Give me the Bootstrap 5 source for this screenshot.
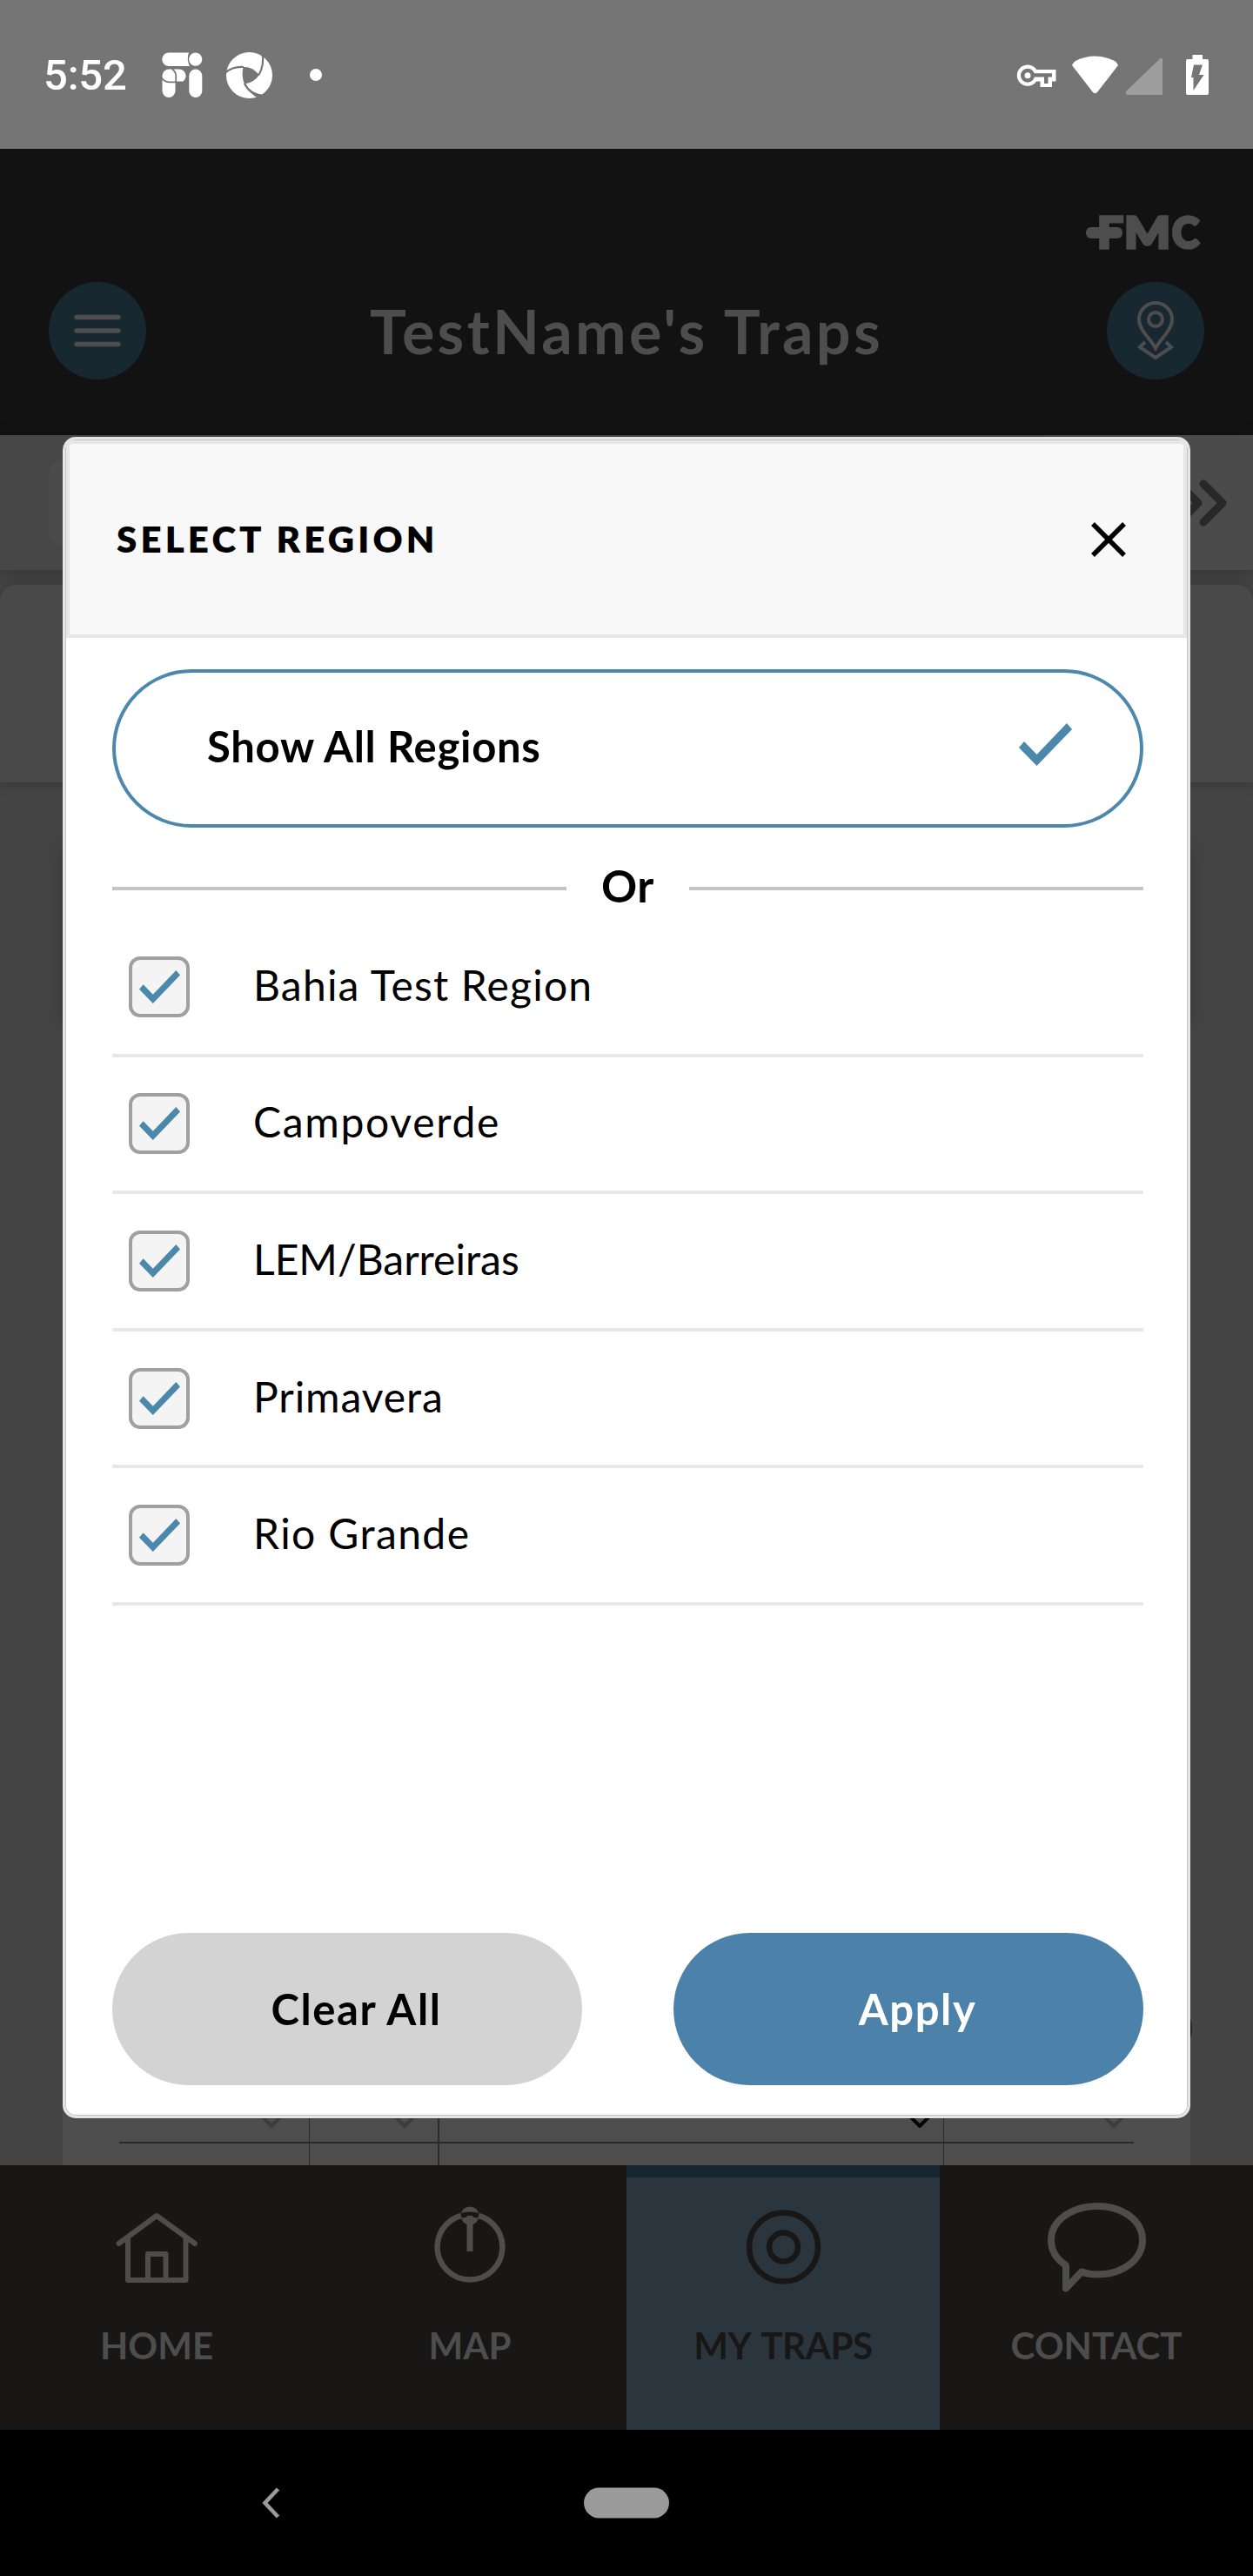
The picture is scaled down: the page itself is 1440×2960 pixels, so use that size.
<!DOCTYPE html>
<html lang="en">
<head>
<meta charset="utf-8">
<title>TestName's Traps</title>
<link href="https://cdn.jsdelivr.net/npm/bootstrap@5.3.0/dist/css/bootstrap.min.css" rel="stylesheet">
<style>
body{margin:0;background:#000;font-family:Lato,"Open Sans",sans-serif;color:#000}
.screen{width:1440px;height:2960px;overflow:hidden;line-height:1}
.screen svg{display:block;flex:none;overflow:visible}
.status-bar{height:171px;background:#757575;padding:0 51px 0 50px;color:#fff}
.clock{font:500 49px/60px Roboto,sans-serif;letter-spacing:-.2px;width:136px;padding-top:2px}
.app-head{height:329px;background:#121212;color:#4d4d4d;padding:76px 56px 64px}
.brand-row{height:39px;padding-right:6px}
.bar-row{height:112px;margin-top:38px}
.round-btn{width:112px;height:112px;background:#172831;border-radius:50%}
.page-title{font-size:70px;font-weight:700;letter-spacing:3.3px;margin:0}
.content{height:1988px;background:#444}
.filter-strip{height:155px;background:#4b4b4b;box-shadow:0 4px 18px rgba(0,0,0,.22);padding:29px 30px 28px 0}
.filter-left{width:1200px;height:155px;margin-top:-29px;margin-bottom:-28px;background:#474747;padding:29px 0 28px 56px}
.filter-box{height:98px;background:#4b4b4b;border-radius:16px}
.summary{height:227px;margin-top:17px;background:#484848;border-radius:18px 18px 0 0;box-shadow:0 2px 14px rgba(0,0,0,.22)}
.shade-card{height:200px;margin:75px 76px 0;background:#444;box-shadow:0 0 18px 2px rgba(0,0,0,.24)}
.trap-card{height:810px;margin:504px 72px 0;background:#4d4d4d}
.trap-grid{padding:0 65px;margin-top:748px;height:62px}
.trap-grid .grid-row{height:37px;border-bottom:2px solid #2a2a2a}
.trap-grid .grid-row + .grid-row{height:25px;border-bottom:0}
.gcell{border-right:1px solid #2a2a2a;padding-bottom:16px}
.gcell:nth-child(2){border-right-width:2px}
.gcell:last-child{border-right:0}
.w-a{width:219px;padding-right:31px}.w-b{width:149px;padding-right:26px}.w-c{width:580px;padding-right:15px}.w-d{padding-right:11px}
.fab{right:70px;top:1793px;width:76px;height:76px;border-radius:50%;background:#13202a}
.sheet{left:72px;top:2px;width:1296px;height:1932px;background:#fff;border:3px solid #e5e5e5;border-radius:15px;box-shadow:inset 0 0 0 1px #c4c4c4;padding:1px}
.sheet-head{height:227px;background:#f8f8f8;border:4px solid #e6e6e6;border-radius:6px 6px 0 0;padding:0 66px 0 54px}
.sheet-title{font-size:42px;font-weight:800;letter-spacing:4.15px;margin:0}
.sheet-body{padding:36px 50px 0 53px}
.all-pill{height:182px;border:4px solid #4b88ab;border-radius:91px;padding:0 78px 5px 105px;font-size:49px;font-weight:700;letter-spacing:.7px}
.all-pill svg{margin-top:-4px}
.or-row{height:106px;padding-top:34px;font-size:51px;font-weight:700;letter-spacing:.5px}
.or-row span{padding-bottom:7px}
.or-row .or-line{height:4px;width:522px;background:#c4c4c4;padding:0}
.region-row{height:157.6px;border-bottom:4px solid #e8e8e8;padding-left:19px;font-size:48px;gap:73px}
.region-name{padding-bottom:4px}
.ls-1{letter-spacing:1.2px}.ls-2{letter-spacing:1.7px}.ls-3{letter-spacing:.9px}.ls-4{letter-spacing:1.4px}
.tick-box{width:70px;height:70px;border:4px solid #a0a0a0;border-radius:13px;background:#f4f4f4}
.sheet-foot{margin-top:376px;padding:0 50px 0 53px}
.pill-btn{width:540px;height:175px;border:0;border-radius:88px;font-size:49px;font-weight:700;padding:0 0 0 21px;line-height:1;letter-spacing:1.6px}
.btn-clear{background:#d3d3d3;color:#000}
.btn-apply{background:#4c82a9;color:#fff}
.tabs{height:304px;background:#181715}
.tab{width:360px;color:#4d4d4d;font-size:42px;font-weight:700;border-top:14px solid transparent}
.tab.on{background:#2b353e;border-top-color:#172732;color:#181715;word-spacing:4px;letter-spacing:-.4px}
.tab svg{margin-top:20px}
.tab span{margin-top:42px}
.sys-nav{height:168px;background:#000}
</style>
<script src="https://cdn.jsdelivr.net/npm/bootstrap@5.3.0/dist/js/bootstrap.bundle.min.js"></script>
</head>
<body>
<svg width="0" height="0" class="position-absolute"><defs>
<symbol id="tick" viewBox="0 0 61 49"><path fill="#4b88ab" d="M6 21 20.500 36 55 0 61 7 20.500 49 0 28z"/></symbol>
<symbol id="down" viewBox="0 0 24 14"><path d="M1 1l11 11L23 1" fill="none" stroke="currentColor" stroke-width="4"/></symbol>
</defs></svg>
<div class="screen d-flex flex-column">
  <div class="status-bar d-flex align-items-center justify-content-between">
    <div class="d-flex align-items-center">
      <div class="clock">5:52</div>
      <svg width="186" height="54" viewBox="186 58 186 54" fill="#fff">
        <path d="M194 59.500h23q-3 7.500 1 15.500h-24a7.700 7.700 0 0 1 0-15.500z"/><circle cx="224.700" cy="67.200" r="7.600"/>
        <rect x="186.500" y="78.500" width="15" height="32.500" rx="7.500"/><path d="M195 78.500h11a7.600 7.600 0 0 1 0 15.300h-11z"/>
        <path d="M197.500 78q5 3.500 4.700 9v6.300h7M202.200 93.300h-8q-5.500 0-8.500-5" fill="none" stroke="#757575" stroke-width="1.700"/>
        <rect x="217.300" y="78.500" width="15" height="32.500" rx="7.500"/>
        <circle cx="286.500" cy="85.500" r="26.500"/>
        <path d="M279.500 76q10-1 18.500 9-6 9-17 10.500-4-9-1.500-19.500z" fill="#757575"/>
        <path d="M259 82.500q9-7.500 21-6.500M301.500 59.500q2.500 14-4 25.500M280.800 94.500q6 13 20.500 14.500" fill="none" stroke="#757575" stroke-width="2.200"/>
        <path d="M281 95q5 10 14 16l8-3q-14-1-22-13z" fill="#757575"/>
        <circle cx="363" cy="85" r="7"/>
      </svg>
    </div>
    <svg width="221" height="48" viewBox="1168 61 221 48" fill="#fff">
      <circle cx="1181" cy="85.700" r="12.200"/><path d="M1188 79h25.500v13.500h-4.500v6.500h-13.500v-6.500h-8z"/>
      <g fill="#757575"><circle cx="1181" cy="85.700" r="8"/><path d="M1186 83.300h23v4.200h-4.500v7.500h-4.500v-7.500h-14z"/></g><circle cx="1181" cy="85.700" r="3.500"/>
      <path d="M1232 74q1-3 4-5 22-11 45 0 3 2 4 5l-24 31q-2.500 2.500-5 0z"/>
      <path d="M1333 66.500q3-2 3 1v40.500h-40q-4-1-1.500-4.500z" fill="#9e9e9e"/>
      <path d="M1370.500 62h11.500v5h5q2 0 2 2v37q0 2-2 2h-22q-2 0-2-2v-37q0-2 2-2h5.500z"/><path d="M1372 73.500h10l-4 11.500h5.500l-12 18v-15h-2.500z" fill="#757575"/>
    </svg>
  </div>

  <header class="app-head">
    <div class="brand-row d-flex justify-content-end">
      <svg width="130" height="39" viewBox="0 0 130 39" fill="#4d4d4d" stroke="#4d4d4d" stroke-width="3.500" font-family="Lato" font-weight="900" font-size="50"><text y="37.500"><tspan x="13" textLength="30" lengthAdjust="spacingAndGlyphs">F</tspan><tspan x="44" textLength="53" lengthAdjust="spacingAndGlyphs">M</tspan><tspan x="99" textLength="31" lengthAdjust="spacingAndGlyphs">C</tspan></text><rect y="14" width="42" height="13" rx="6" stroke="none"/></svg>
    </div>
    <div class="bar-row d-flex align-items-center justify-content-between">
      <div class="round-btn d-flex align-items-center justify-content-center"><svg width="54" height="38" stroke="#4d4d4d" stroke-width="5.500" stroke-linecap="round"><path d="M3 3.500h48M3 19h48M3 34.500h48"/></svg></div>
      <h1 class="page-title">TestName's Traps</h1>
      <div class="round-btn d-flex align-items-center justify-content-center"><svg width="42" height="66" viewBox="0 0 42 66" fill="none" stroke="#4d4d4d" stroke-width="4"><path d="M21 53C15 42 2 32 2 20a19 19 0 0 1 38 0C40 32 27 42 21 53z"/><circle cx="21" cy="20" r="8"/><path d="M9 46l-6 6 18 12 18-12-6-6"/></svg></div>
    </div>
  </header>

  <main class="content position-relative">
    <div class="filter-strip d-flex justify-content-between align-items-center">
      <div class="filter-left"><div class="filter-box"></div></div>
      <svg width="54" height="52" viewBox="0 0 54 52" fill="none" stroke="#282828" stroke-width="9" stroke-linecap="round" stroke-linejoin="round"><path d="M-1 4l22 22L-1 48M27 4l22 22-22 22"/></svg>
    </div>
    <div class="summary"></div>
    <div class="shade-card"></div>
    <div class="trap-card d-flex flex-column">
      <div class="trap-grid">
        <div class="grid-row d-flex">
          <div class="gcell w-a d-flex justify-content-end align-items-end" style="color:#3c3c3c"><svg width="24" height="14"><use href="#down"/></svg></div>
          <div class="gcell w-b d-flex justify-content-end align-items-end" style="color:#3c3c3c"><svg width="24" height="14"><use href="#down"/></svg></div>
          <div class="gcell w-c d-flex justify-content-end align-items-end" style="color:#000"><svg width="24" height="14"><use href="#down"/></svg></div>
          <div class="gcell w-d flex-fill d-flex justify-content-end align-items-end" style="color:#3c3c3c"><svg width="24" height="14"><use href="#down"/></svg></div>
        </div>
        <div class="grid-row d-flex">
          <div class="gcell w-a"></div><div class="gcell w-b"></div><div class="gcell w-c"></div><div class="gcell flex-fill"></div>
        </div>
      </div>
    </div>
    <div class="fab position-absolute"></div>

    <section class="sheet position-absolute">
      <div class="sheet-head d-flex align-items-center justify-content-between">
        <h2 class="sheet-title">SELECT REGION</h2>
        <svg width="40" height="40" stroke="#000" stroke-width="5.500"><path d="M2 2l36 36M38 2L2 38"/></svg>
      </div>
      <div class="sheet-body">
        <div class="all-pill d-flex align-items-center justify-content-between"><span>Show All Regions</span><svg width="61" height="49"><use href="#tick"/></svg></div>
        <div class="or-row d-flex align-items-center justify-content-between"><span class="or-line"></span><span>Or</span><span class="or-line"></span></div>
        <div class="region-row d-flex align-items-center"><span class="tick-box d-flex align-items-center justify-content-center"><svg width="47" height="38"><use href="#tick"/></svg></span><span class="region-name ls-1">Bahia Test Region</span></div>
        <div class="region-row d-flex align-items-center"><span class="tick-box d-flex align-items-center justify-content-center"><svg width="47" height="38"><use href="#tick"/></svg></span><span class="region-name ls-2">Campoverde</span></div>
        <div class="region-row d-flex align-items-center"><span class="tick-box d-flex align-items-center justify-content-center"><svg width="47" height="38"><use href="#tick"/></svg></span><span class="region-name">LEM/Barreiras</span></div>
        <div class="region-row d-flex align-items-center"><span class="tick-box d-flex align-items-center justify-content-center"><svg width="47" height="38"><use href="#tick"/></svg></span><span class="region-name ls-3">Primavera</span></div>
        <div class="region-row d-flex align-items-center"><span class="tick-box d-flex align-items-center justify-content-center"><svg width="47" height="38"><use href="#tick"/></svg></span><span class="region-name ls-4">Rio Grande</span></div>
      </div>
      <div class="sheet-foot d-flex justify-content-between">
        <button class="pill-btn btn-clear">Clear All</button>
        <button class="pill-btn btn-apply">Apply</button>
      </div>
    </section>
  </main>

  <nav class="tabs d-flex">
    <div class="tab d-flex flex-column align-items-center"><svg width="120" height="110" viewBox="121 2522 120 110" fill="none" stroke="#4d4d4d" stroke-width="6" stroke-linecap="round" stroke-linejoin="round"><path d="M137.500 2578l43.500-32 44 32M148 2572v48h66.500v-48M171 2618v-28h20.500v28"/></svg><span>HOME</span></div>
    <div class="tab d-flex flex-column align-items-center"><svg width="120" height="110" viewBox="481 2522 120 110" fill="none"><circle cx="541" cy="2582" r="37.400" stroke="#4d4d4d" stroke-width="6.500"/><circle cx="541" cy="2546" r="10.500" fill="#4d4d4d"/><path d="M531 2546q10-3 20 0" stroke="#181715" stroke-width="6"/><path d="M541 2546v41" stroke="#4d4d4d" stroke-width="7"/></svg><span>MAP</span></div>
    <div class="tab on d-flex flex-column align-items-center"><svg width="120" height="110" viewBox="840 2522 120 110" fill="none" stroke="#181715" stroke-width="6.500"><circle cx="900.500" cy="2582" r="39.500"/><circle cx="900.500" cy="2582" r="16.500"/></svg><span>MY TRAPS</span></div>
    <div class="tab d-flex flex-column align-items-center"><svg width="120" height="110" viewBox="1200 2522 120 110" fill="none" stroke="#4d4d4d" stroke-width="8" stroke-linejoin="round"><path d="M1225 2603v26.500l18-19q8 3 18 3c29 0 52-17 52-39.500s-23-39-52-39-53 16.500-53 39q0 18 17 29z"/></svg><span>CONTACT</span></div>
  </nav>
  <div class="sys-nav d-flex align-items-center">
    <svg width="1440" height="36" viewBox="0 2858 1440 36"><path d="M319.500 2860l-15 16 15 16" fill="none" stroke="#9a9a9a" stroke-width="4.600"/><rect x="671" y="2858.500" width="98" height="35" rx="17.500" fill="#9a9a9a"/></svg>
  </div>
</div>
</body>
</html>
